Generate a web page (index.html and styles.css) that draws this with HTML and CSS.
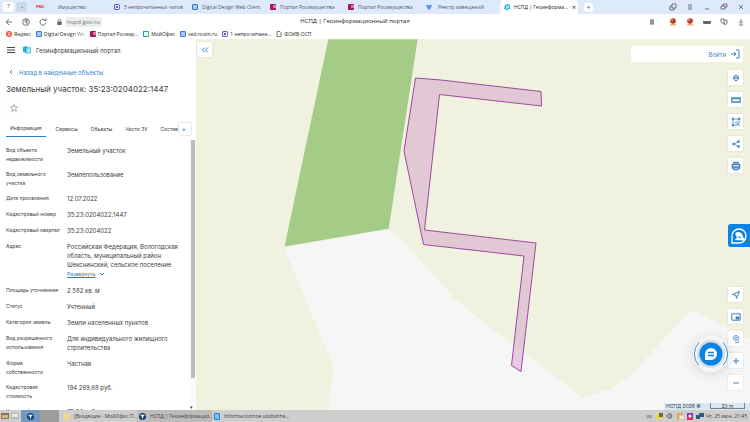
FILE: index.html
```
<!DOCTYPE html>
<html lang="ru">
<head>
    <meta charset="UTF-8">
    <title>НСПД | Геоинформационный портал</title>
    <link rel="stylesheet" href="styles.css">
</head>
<body>
    <header class="browser">
        <div class="tabs">
            <div class="pins"><span class="pin active">7</span><span class="pin">⌄</span></div>
            <a class="tab" href="#"><b class="fav pml">РМL</b><span class="push">Имущество</span></a>
            <a class="tab" href="#"><i class="fav ring"></i><span>5 непрочитанных чатов</span></a>
            <a class="tab" href="#"><i class="fav doc"></i><span>Digital Design Web Client</span></a>
            <a class="tab" href="#"><i class="fav rosim"></i><span>Портал Росимущества</span></a>
            <a class="tab" href="#"><i class="fav rosim"></i><span>Портал Росимущества</span></a>
            <a class="tab" href="#">
                <svg class="fav" viewBox="0 0 6 6"><path d="M0 1h6L5 4 3 6 1 4z" fill="#5b9cf0"/></svg>
                <span class="near">Реестр извещений</span>
            </a>
            <a class="tab current" href="#">
                <svg class="fav" viewBox="0 0 6 6"><path d="M1 1l3-1 2 1v4L3 6 0 5z" fill="#2bb2df"/><path d="M2 2l3-1v3L2 5z" fill="#9be3f5"/></svg>
                <span>НСПД | Геоинформа...</span><em>×</em>
            </a>
            <button class="new-tab">+</button>
            <div class="window-buttons">
                <svg viewBox="0 0 8 8"><path d="M3 1h4v4H3zM3 3H1v4h4V5"/></svg>
                <svg viewBox="0 0 8 8"><path d="M2 2h4M2 4h4M2 6h4"/></svg>
                <svg viewBox="0 0 8 8"><path d="M2 6h4"/></svg>
                <svg viewBox="0 0 8 8"><path d="M3 3V1h4v3H5M1 3h4v3H1z"/></svg>
                <svg viewBox="0 0 8 8"><path d="M2 2l4 4M6 2L2 6"/></svg>
            </div>
        </div>
        <div class="toolbar">
            <div class="nav">
                <svg viewBox="0 0 8 8"><path d="M7 4H1M4 1L1 4l3 3"/></svg>
                <svg viewBox="0 0 8 8"><circle cx="4" cy="4" r="3.4"/><path d="M5 6.300V1.800H4Q2.800 2 3 3.200T5 4"/></svg>
                <svg viewBox="0 0 8 8"><path d="M6.500 2.500A3 3 0 1 0 7 4.500M7 .5v2.200H4.800"/></svg>
                <svg class="lock" viewBox="0 0 8 8"><path d="M2.500 4V2.500Q2.500 1 4 1t1.500 1.500V4"/><path d="M2 4h4v3H2z" fill="#666"/></svg>
            </div>
            <span class="host">nspd.gov.ru</span>
            <h1>НСПД | Геоинформационный портал</h1>
            <div class="extensions">
                <svg class="reader" viewBox="0 0 8 8"><path d="M2 2h4M2 3h4M2 4h4M2 5h4M2 6h4"/></svg>
                <svg viewBox="0 0 8 8"><path d="M0 7.500q4-4 8 0z" fill="#e9b26b" stroke="none"/><circle cx="4" cy="3" r="2.800" fill="#b63a2b" stroke="none"/><circle cx="3" cy="2" r="1" fill="#e6a29a" stroke="none"/></svg>
                <svg viewBox="0 0 8 8"><path d="M0 7.500q4-4 8 0z" fill="#e9b26b" stroke="none"/><circle cx="4" cy="3" r="2.800" fill="#b63a2b" stroke="none"/><circle cx="3" cy="2" r="1" fill="#e6a29a" stroke="none"/></svg>
                <svg viewBox="0 0 8 8"><path d="M0 3h8v2L7 6H1L0 5z" fill="#666" stroke="none"/></svg>
                <svg viewBox="0 0 8 8"><path d="M1 1h3v5L1 4zM4 2h3v3L5 7 4 5"/></svg>
                <svg viewBox="0 0 8 8"><path d="M4 1v4M2 3.500l2 2 2-2M2 7h4"/></svg>
            </div>
        </div>
        <nav class="bookmarks">
            <a href="#"><i class="fav ya">Я</i><span>Яндекс</span></a>
            <a href="#"><i class="fav doc"></i><span class="fade">Digital Design We</span></a>
            <a href="#"><i class="fav rosim"></i><span>Портал Росиму...</span></a>
            <a href="#"><i class="fav my"></i><span>МойОфис</span></a>
            <a href="#"><i class="fav doc"></i><span>sed.rosim.ru</span></a>
            <a href="#"><i class="fav ring"></i><span>1 непрочитанн...</span></a>
            <a href="#"><svg class="fav" viewBox="0 0 6 6"><path d="M1 .5h3l1 1v4H1z" fill="none" stroke="#444" stroke-width=".7"/></svg><span>ФОИВ-ОСП</span></a>
        </nav>
    </header>

    <main>
        <aside class="panel">
            <div class="brand">
                <svg class="burger" viewBox="0 0 8 8"><path d="M0 1.500h8M0 4h8M0 6.500h8" stroke="#444"/></svg>
                <svg class="logo" viewBox="0 0 8 8"><path d="M0 1l3-1 2 1v5L3 7 0 6z" fill="#25b7d3"/><path d="M3 2l4-1 1 1v5L4 8 3 7z" fill="#4bc9ea"/><path d="M4 3l3-1v4L4 7z" fill="#fff" opacity=".6"/></svg>
                <span>Геоинформационный портал</span>
            </div>
            <a class="back" href="#"><svg viewBox="0 0 6 6"><path d="M4 1L2 3l2 2"/></svg>Назад в найденные объекты</a>
            <h2>Земельный участок: 35:23:0204022:1447</h2>
            <button class="star" aria-label="В избранное"><svg viewBox="0 0 8 8"><path d="M4 .6l1 2.300 2.500.2-1.900 1.700.6 2.500L4 6 1.800 7.300l.6-2.500L.5 3.100 3 2.900z"/></svg></button>
            <div class="sections">
                <button class="selected">Информация</button>
                <button>Сервисы</button>
                <button>Объекты</button>
                <button>Части ЗУ</button>
                <button>Состав</button>
                <button class="more" aria-label="Ещё">▸</button>
            </div>
            <div class="details">
                <dl>
                    <dt>Вид объекта недвижимости</dt><dd>Земельный участок</dd>
                    <dt>Вид земельного участка</dt><dd>Землепользование</dd>
                    <dt>Дата присвоения</dt><dd>12.07.2022</dd>
                    <dt>Кадастровый номер</dt><dd>35:23:0204022:1447</dd>
                    <dt>Кадастровый квартал</dt><dd>35:23:0204022</dd>
                    <dt>Адрес</dt>
                    <dd>Российская Федерация, Вологодская<br>область, муниципальный район<br>Шекснинский, сельское поселение<br><a href="#">Развернуть</a><svg viewBox="0 0 6 6"><path d="M1 2l2 2 2-2"/></svg></dd>
                    <dt>Площадь уточненная</dt><dd>2 582 кв. м</dd>
                    <dt>Статус</dt><dd>Учтенный</dd>
                    <dt>Категория земель</dt><dd>Земли населенных пунктов</dd>
                    <dt>Вид разрешенного использования</dt><dd>Для индивидуального жилищного строительства</dd>
                    <dt>Форма собственности</dt><dd>Частная</dd>
                    <dt>Кадастровая стоимость</dt><dd>194 269,68 руб.</dd>
                    <dt>Удельный показатель</dt><dd>75,24 руб./кв. м</dd>
                </dl>
                <div class="scroll"><div class="thumb"></div><span>▾</span></div>
            </div>
        </aside>

        <section class="map">
            <svg class="ground" viewBox="0 0 554 371" preserveAspectRatio="xMinYMin slice">
                <rect width="554" height="371" fill="#f0f1df"/>
                <path d="M88 208L193 190 207 202 258 259 268 268 387 359 416 349 434 336 496 271 554 300V371H132L138 330 130 310z" fill="#f6f6f7"/>
                <path d="M132 0H222L193 190 88 208z" fill="#a4cc86" stroke="#f8f8f0" stroke-width=".6"/>
                <path d="M219.500 39L245 41 345 52.500 345.500 67 243.500 55.500 228.500 191 340 204 325 332.500 315.500 326.500 328 217 227.500 205.500 208 112z" fill="#cf8fc7" fill-opacity=".42" stroke="#9e4a9f"/>
            </svg>

            <button class="tool collapse" aria-label="Свернуть"><svg viewBox="0 0 10 10"><path d="M5 2.500L2.500 5 5 7.500M8 2.500L5.500 5 8 7.500"/></svg></button>

            <div class="top-tools">
                <a class="login" href="#">Войти<svg viewBox="0 0 10 10"><path d="M1 5h5M4 3l2 2-2 2M6 1h3v8H6"/></svg></a>
                <button class="tool" aria-label="Слои"><svg viewBox="0 0 10 10"><path d="M5 2l2.500 2L5 6 2.500 4z" fill="#a9cbe8"/><path d="M2.500 4v2L5 8l2.500-2V4"/></svg></button>
                <button class="tool" aria-label="Линейка"><svg viewBox="0 0 10 10"><path d="M.8 3h8.400v4H.8z" stroke-width="1.300"/><path d="M3 3v2M5 3v2M7 3v2" stroke-width=".7"/></svg></button>
                <button class="tool" aria-label="Выделение"><svg viewBox="0 0 10 10"><path d="M2 8V2h6v3M2 8h3" stroke-width=".8"/><path d="M.8.8h2v2h-2zM7.200.8h2v2h-2zM.8 7.200h2v2h-2z" fill="#3d83bd" stroke="none"/><path d="M4 6l2-2M6 9V6h3M6 6l3 3" stroke-width=".8"/></svg></button>
                <button class="tool" aria-label="Поделиться"><svg viewBox="0 0 10 10"><path d="M7.500 2.500L3 5l4.500 2.500" stroke-width=".8"/><g fill="#3d83bd" stroke="none"><circle cx="7.500" cy="2.500" r="1.300"/><circle cx="2.500" cy="5" r="1.300"/><circle cx="7.500" cy="7.500" r="1.300"/></g></svg></button>
                <button class="tool" aria-label="Печать"><svg viewBox="0 0 10 10"><path d="M3 3V1.500h4V3M3 7H1.300V3.500h7.400V7H7M3 6h4v2.500H3z" stroke-width="1.300"/></svg></button>
            </div>

            <button class="helper" aria-label="Помощник"><svg viewBox="0 0 18 18"><path d="M2 16V9a7 7 0 1 1 7 7z" fill="none" stroke="#fff" stroke-width="1.300"/><path d="M4.500 13q2-1 2.500-3L5.500 8Q5 4.500 8.500 5q4 .5 4.500 5l1.500 2v1.500z" fill="#fff"/><path d="M8 9.500l3 1.500" stroke="#0b83e2"/></svg></button>

            <div class="bottom-tools">
                <button class="tool" aria-label="Местоположение"><svg viewBox="0 0 10 10"><path d="M8.500 1.500L1.500 4.500l3.300.7.7 3.300z"/></svg></button>
                <button class="tool" aria-label="Обзорная карта"><svg viewBox="0 0 10 10"><path d="M.8 1.800h8.400v6.400H.8z"/><path d="M5 5h3v2H5z" fill="#3d83bd"/></svg></button>
                <button class="tool" aria-label="Панорама"><svg viewBox="0 0 10 10"><circle cx="5" cy="4" r="2.500" stroke-width=".8"/><circle cx="5" cy="4" r=".8" stroke-width=".8"/><path d="M4 8.500h3l1-2" stroke-width=".8"/></svg></button>
                <button class="tool" aria-label="Приблизить"><svg viewBox="0 0 10 10"><path d="M2 5h6M5 2v6"/></svg></button>
                <button class="tool" aria-label="Отдалить"><svg viewBox="0 0 10 10"><path d="M2 5h6"/></svg></button>
            </div>

            <button class="chat" aria-label="Чат">
                <svg viewBox="0 0 36 36"><circle cx="18" cy="18" r="14" fill="#c9d4dd" opacity=".7"/><circle cx="18" cy="18" r="11.500" fill="#0b83e2"/><path d="M12 24v-6a6 6 0 1 1 6 6z" fill="#fff"/><path d="M15 16.500h6M15 19.500h6" stroke="#0b83e2" stroke-width="1.300"/><path d="M6 6.500a16.500 16.500 0 0 0 0 23M30 6.500a16.500 16.500 0 0 1 0 23" fill="none" stroke="#3f8dc9"/></svg>
            </button>

            <div class="credits"><span>НСПД 2026 ©</span><span class="scale">20 m</span></div>
        </section>
    </main>

    <footer class="taskbar">
        <svg viewBox="0 0 8 8"><path d="M0 1h8v6H0z" fill="#84765d"/><path d="M1 3h6v3H1z" fill="#d9b778"/></svg>
        <svg viewBox="0 0 8 8"><path d="M0 1h8v6H0z" fill="#b8b8b5"/><path d="M1 2h6v3H1z" fill="#e8e8e6"/></svg>
        <div class="pager"><span class="desk on"><svg class="app" viewBox="0 0 8 8"><circle cx="4" cy="4" r="4" fill="#163f78"/><path d="M2 2.500h4L4 4.500zM4 4v2.500" fill="#fff" stroke="#fff"/></svg></span><span class="desk"></span></div>
        <button class="window"><i class="app mail"></i><span>[Входящие - МойОфис П...</span></button>
        <button class="window on"><svg class="app" viewBox="0 0 8 8"><circle cx="4" cy="4" r="4" fill="#163f78"/><path d="M2 2.500h4L4 4.500zM4 4v2.500" fill="#fff" stroke="#fff"/></svg><span>НСПД | Геоинформацио...</span></button>
        <button class="window"><i class="app note"></i><span>Informacionnoe soobshhe...</span></button>
        <div class="tray">
            <span>us</span>
            <svg viewBox="0 0 8 8"><path d="M0 2h7v5H0z" fill="#eadb55"/><path d="M3 1h4v4H3z" fill="#6f6b35"/></svg>
            <svg viewBox="0 0 8 8"><path d="M1 3h1l2-2v6L2 5H1zM5 2q2 2 0 4" fill="none" stroke="#555" stroke-width=".8"/></svg>
            <svg viewBox="0 0 8 8"><path d="M1 1h6v2H3v5H1z" fill="#e3a75b"/><path d="M4 4h3v3H4z" fill="#f0e6cf"/></svg>
            <svg viewBox="0 0 8 8"><path d="M1 1h6v7H1z" fill="#8f29bf"/><path d="M1 5h6v3H1z" fill="#df315f"/><circle cx="4" cy="4" r="1.500" fill="#fff"/></svg>
            <svg viewBox="0 0 8 8"><path d="M3 1h5v4H3zM0 3h4v4H0z" fill="#285d83"/></svg>
            <time>Чт, 25 июн, 21:45</time>
        </div>
    </footer>
</body>
</html>
```
FILE: styles.css
```
* {
    box-sizing: border-box;
}

body {
    display: flex;
    flex-direction: column;
    height: 100vh;
    margin: 0;
    overflow: hidden;
    font-family: Inter, "Noto Sans", sans-serif;
    font-size: 6px;
    line-height: 9px;
    color: #3a3d42;
    background-color: #fff;
}

a {
    color: inherit;
    text-decoration: none;
}

button {
    padding: 0;
    border: 0;
    background: none;
    font: inherit;
    color: inherit;
}

svg {
    display: block;
    flex: none;
}

/* browser */
.browser {
    flex: none;
    font-family: "Open Sans", sans-serif;
}

.tabs {
    display: flex;
    align-items: center;
    height: 14px;
    background-color: #deeafc;
    font-size: 5px;
    color: #52565e;
}

.pins {
    display: flex;
    gap: 2px;
    width: 32px;
    padding-left: 3px;
}

.pin {
    width: 11px;
    height: 10px;
    border-radius: 3px;
    background-color: #cbd8ea;
    text-align: center;
}

.pin.active {
    background-color: #fff;
}

.tab {
    display: flex;
    align-items: center;
    gap: 4px;
    flex: 0 1 78px;
    height: 14px;
    padding: 0 4px;
    white-space: nowrap;
    overflow: hidden;
}

.tab .push {
    margin-left: 12px;
}

.tab .near {
    margin-left: 2px;
}

.tab.current {
    border-radius: 4px 4px 0 0;
    background-color: #fff;
    color: #222;
}

.tab em {
    margin-left: auto;
    font-size: 7px;
    font-style: normal;
}

.fav {
    flex: none;
    width: 6px;
    height: 6px;
    border-radius: 1px;
    font-style: normal;
}

.pml {
    font-size: 4px;
    line-height: 6px;
    color: #e32934;
}

.ring {
    border: 1px solid #4858cf;
    border-right-color: #9253dd;
    border-radius: 2px;
    background: radial-gradient(#5353d4 35%, #fff 45%);
}

.doc {
    border: 1px solid #3478d0;
    background-color: #a9c9f3;
}

.rosim {
    border: 1px solid #ad1558;
    border-width: 1px 0 2px 3px;
    background-color: #d77ea3;
}

.my {
    border: 1px solid #16a4b4;
    border-right-color: #31bd79;
    background-color: #e7ffff;
}

.ya {
    border-radius: 3px;
    background-color: #f04a37;
    font-size: 5px;
    line-height: 6px;
    text-align: center;
    color: #fff;
}

.new-tab {
    width: 9px;
    height: 9px;
    margin-left: 6px;
    border-radius: 3px;
    background-color: #fff;
    font-size: 7px;
    line-height: 9px;
}

.window-buttons,
.extensions {
    display: flex;
    gap: 9px;
    margin-left: auto;
    padding-right: 5px;
}

.window-buttons svg,
.extensions svg,
.nav svg {
    width: 8px;
    height: 8px;
    fill: none;
    stroke: #555;
    stroke-width: .8;
}

.extensions .reader {
    margin-right: 4px;
}

.toolbar {
    position: relative;
    display: flex;
    align-items: center;
    height: 15px;
}

.nav {
    display: flex;
    gap: 9px;
    padding-left: 5px;
}

.nav .lock {
    width: 7px;
}

.host {
    margin-left: 2px;
    padding: 0 2px;
    border-radius: 3px;
    background-color: #ededed;
    font-size: 6px;
    line-height: 10px;
    color: #777;
}

.toolbar h1 {
    position: absolute;
    left: 0;
    right: 0;
    margin: 0;
    padding-right: 40px;
    font-size: 6px;
    font-weight: 500;
    text-align: center;
    color: #222;
    pointer-events: none;
}

.bookmarks {
    display: flex;
    gap: 5px;
    height: 10px;
    padding-left: 6px;
    font-size: 5px;
    white-space: nowrap;
    color: #222;
}

.bookmarks a {
    display: flex;
    align-items: center;
    gap: 2px;
}

.bookmarks .fade {
    color: transparent;
    background: linear-gradient(90deg, #222 75%, #ccc);
    background-clip: text;
    -webkit-background-clip: text;
}

/* left panel */
main {
    display: flex;
    flex: 1;
    min-height: 0;
}

.panel {
    display: flex;
    flex-direction: column;
    flex: none;
    width: 196px;
    overflow: hidden;
}

.brand {
    display: flex;
    align-items: center;
    flex: none;
    height: 22px;
    padding-left: 7px;
}

.burger {
    width: 8px;
    height: 8px;
}

.logo {
    width: 8px;
    height: 8px;
    margin: 0 5px 0 8px;
}

.back {
    display: flex;
    align-items: center;
    gap: 5px;
    height: 22px;
    padding-left: 8px;
    color: #3486ca;
}

.back svg,
.details dd svg {
    width: 6px;
    height: 6px;
    fill: none;
    stroke: #2580c8;
}

.panel h2 {
    margin: 0 6px;
    font-size: 8px;
    line-height: 12px;
    font-weight: 400;
    white-space: nowrap;
}

.star {
    flex: none;
    width: 16px;
    height: 16px;
    margin: 5px 6px;
    padding: 4px;
    border-radius: 2px;
    box-shadow: 0 0 1px #ccc;
}

.star svg {
    width: 8px;
    height: 8px;
    fill: none;
    stroke: #888;
    stroke-width: .7;
}

.sections {
    display: flex;
    align-items: center;
    flex: none;
    gap: 13px;
    height: 16px;
    padding-left: 6px;
    font-size: 5px;
}

.sections button {
    height: 16px;
    white-space: nowrap;
}

.sections .selected {
    padding: 0 4px;
    margin-right: -3px;
    border-bottom: 1px solid #2580c8;
}

.sections .more {
    width: 12px;
    height: 12px;
    margin-left: -12px;
    box-shadow: 0 0 2px #bbb;
    background-color: #fff;
    color: #2580c8;
}

.details {
    display: flex;
    flex: 1;
    min-height: 0;
    padding-top: 3px;
}

.details dl {
    display: grid;
    grid-template-columns: 55px 1fr;
    gap: 7px 6px;
    flex: 1;
    align-content: start;
    margin: 0;
    padding: 6px 3px 0 6px;
}

.details dt {
    margin-bottom: -1px;
    font-size: 5px;
}

.details dd {
    margin: 0;
}

.details dd a {
    font-size: 5px;
    color: #2580c8;
    text-decoration: underline;
}

.details dd svg {
    display: inline-block;
    margin-left: 4px;
    vertical-align: middle;
}

.scroll {
    display: flex;
    flex-direction: column;
    justify-content: space-between;
    width: 6px;
    background-color: #fafafa;
}

.thumb {
    width: 4px;
    height: 88%;
    margin-left: 1px;
    background-color: #bdbdbd;
}

.scroll span {
    font-size: 5px;
    line-height: 6px;
}

/* map */
.map {
    position: relative;
    flex: 1;
    overflow: hidden;
    background-color: #f0f1df;
}

.ground {
    position: absolute;
    width: 100%;
    height: 100%;
}

.tool {
    display: flex;
    align-items: center;
    justify-content: center;
    width: 15px;
    height: 15px;
    border-radius: 1px;
    background-color: #fff;
    box-shadow: 0 0 2px #ccd2d0;
}

.tool svg,
.login svg {
    width: 10px;
    height: 10px;
    fill: none;
    stroke: #3d83bd;
}

.collapse {
    position: absolute;
    top: 3px;
    left: 1px;
}

.top-tools,
.bottom-tools {
    position: absolute;
    right: 7px;
    display: flex;
    flex-direction: column;
    align-items: flex-end;
    gap: 7px;
}

.top-tools {
    top: 7px;
}

.bottom-tools {
    bottom: 20px;
}

.login {
    display: flex;
    align-items: center;
    justify-content: flex-end;
    gap: 4px;
    width: 112px;
    height: 16px;
    margin-bottom: 1px;
    padding-right: 3px;
    background-color: #fff;
    color: #3486ca;
}

.helper {
    position: absolute;
    top: 185px;
    right: 0;
    width: 22px;
    height: 23px;
    padding: 2px;
    border-radius: 3px 0 0 3px;
    background-color: #0b83e2;
}

.helper svg {
    width: 18px;
    height: 18px;
}

.chat {
    position: absolute;
    right: 21px;
    bottom: 38px;
    border-radius: 18px;
    box-shadow: 0 2px 12px rgba(80, 90, 100, 0.2);
}

.chat svg {
    width: 36px;
    height: 36px;
}

.credits {
    position: absolute;
    right: 0;
    bottom: 0;
    display: flex;
    justify-content: space-between;
    width: 86px;
    height: 7px;
    padding: 0 5px 0 2px;
    background-color: #d9e8f3;
    font-size: 5px;
    line-height: 7px;
}

.scale {
    width: 35px;
    height: 6px;
    border: 1px solid #77828a;
    border-top: 0;
    line-height: 6px;
    text-align: center;
}

/* taskbar */
.taskbar {
    display: flex;
    align-items: center;
    flex: none;
    height: 12px;
    padding-left: 1px;
    background-color: #cfcecc;
    font-family: "Open Sans", sans-serif;
    font-size: 5px;
}

.taskbar svg {
    width: 8px;
    height: 8px;
    margin-right: 2px;
}

.pager {
    display: flex;
    margin-right: 3px;
}

.desk {
    display: flex;
    align-items: center;
    justify-content: center;
    width: 19px;
    height: 12px;
    background-color: #9d9d9c;
}

.desk.on {
    background-color: #7399bf;
}

.window {
    display: flex;
    align-items: center;
    gap: 4px;
    width: 75px;
    height: 12px;
    padding: 0 2px;
    white-space: nowrap;
}

.window.on {
    background-color: #bdbcba;
}

.app {
    flex: none;
    width: 6px;
    height: 7px;
    border-radius: 1px;
}

.taskbar svg.app {
    width: 7px;
    height: 7px;
    margin: 0;
}

.mail {
    background-color: #efd88e;
}

.note {
    border: 1px solid #1687d4;
    background-color: #73c3f1;
}

.tray {
    display: flex;
    align-items: center;
    margin-left: auto;
    padding-right: 3px;
}

.tray span {
    margin-right: 4px;
}
```
